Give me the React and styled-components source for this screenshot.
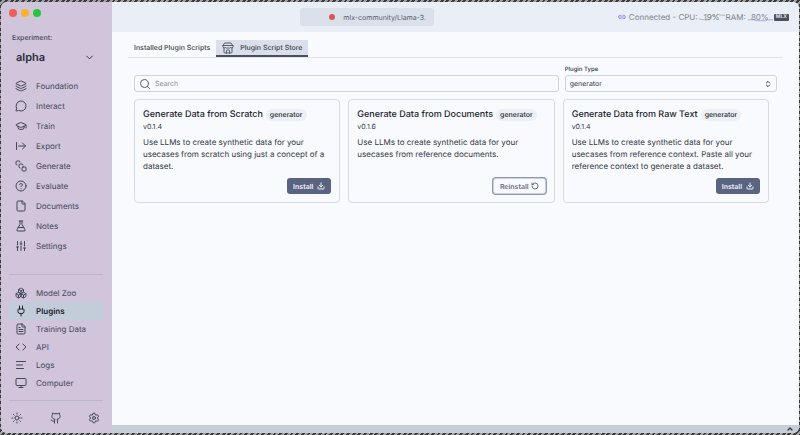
import React from 'react';
import styled, { createGlobalStyle } from 'styled-components';
import {
  Layers, MessageCircle, GraduationCap, ArrowRightFromLine, SquareStack, CircleHelp, File, FlaskConical,
  SlidersVertical, Boxes, Plug, FileText, Code, AlignLeft, Monitor, Sun, Github, Settings, Search,
  ChevronsUpDown, ChevronDown, ChevronUp, Download, RotateCcw, Link2,
} from 'lucide-react';

const GlobalStyle = createGlobalStyle`
  * { box-sizing: border-box; }
  body {
    margin: 0;
    font-family: Inter, "Liberation Sans", sans-serif;
    font-size: 8px;
    color: #32383e;
    text-rendering: geometricPrecision;
  }
  button, input, select { font: inherit; color: inherit; text-rendering: inherit; }
  a { color: inherit; text-decoration: none; }
  svg { flex: none; }
`;

const Desktop = styled.div`
  min-height: 100vh;
  padding: 2px 1px;
  display: flex;
  background: repeating-linear-gradient(135deg, #3a3a3c 0 2px, #a2a2a0 2px 4px);
`;

const Window = styled.div`
  flex: 1;
  min-width: 0;
  display: grid;
  grid-template-columns: 111px minmax(0, 1fr);
  border-radius: 6px;
  overflow: hidden;
  background: #f9fafe;
`;

const Sidebar = styled.aside`
  display: flex;
  flex-direction: column;
  padding: 7px 9px 0 8px;
  background: #d0c5da;
  color: #45455a;
`;

const Lights = styled.div`
  display: flex;
  gap: 4px;
`;

const Light = styled.span`
  width: 8px;
  height: 8px;
  border-radius: 50%;
  background: ${(p) => p.$color};
`;

const ExperimentLabel = styled.div`
  margin-top: 15px;
  padding-left: 3px;
  font-size: 7px;
  line-height: 12px;
  font-weight: 500;
`;

const ExperimentButton = styled.button`
  display: flex;
  align-items: center;
  justify-content: space-between;
  margin-top: 3px;
  padding: 0 8px 0 7px;
  border: 0;
  background: none;
  font-size: 11px;
  line-height: 20px;
  font-weight: 600;
  color: #2c2c3c;
`;

const Nav = styled.nav`
  display: flex;
  flex-direction: column;
  margin-top: ${(p) => p.$top}px;
`;

const NavItem = styled.a`
  display: flex;
  align-items: center;
  gap: 9px;
  height: ${(p) => (p.$dense ? 18 : 20)}px;
  padding-left: 6px;
  font-size: 8px;
  font-weight: ${(p) => (p.$active ? 600 : 400)};
  background: ${(p) => (p.$active ? '#c3cdd9' : 'transparent')};
  color: ${(p) => (p.$active ? '#20202e' : '#45455a')};
`;

const Divider = styled.hr`
  width: 100%;
  margin: ${(p) => p.$top}px 0 0;
  border: 0;
  border-top: 1px solid #bbb7cb;
`;

const SidebarFooter = styled.div`
  display: flex;
  justify-content: space-between;
  padding: 11px 3px 0 2px;
`;

const IconButton = styled.button`
  display: flex;
  padding: 0;
  border: 0;
  background: none;
`;

const Main = styled.main`
  display: flex;
  flex-direction: column;
  min-width: 0;
`;

const Header = styled.header`
  display: grid;
  grid-template-columns: 1fr 134px 2fr;
  align-items: center;
  height: 30px;
  padding: 0 10px;
  background: #eaeef6;
`;

const ModelPill = styled.div`
  grid-column: 2;
  display: flex;
  align-items: center;
  justify-content: center;
  gap: 8px;
  height: 18px;
  padding-left: 22px;
  border-radius: 3px;
  background: #dae1eb;
  color: #555e68;
  font-size: 7px;
  white-space: nowrap;
`;

const Dot = styled.span`
  width: 6px;
  height: 6px;
  border-radius: 50%;
  background: #dc5454;
`;

const Status = styled.div`
  display: flex;
  align-items: center;
  justify-content: flex-end;
  white-space: nowrap;
  color: #7d838c;
`;

const StatusText = styled.span`
  margin-left: 3px;
`;

const Meter = styled.span`
  display: grid;
  place-items: center;
  width: 28px;
  > * { grid-area: 1 / 1; }
`;

const Chip = styled.span`
  padding: 0 2px;
  border-radius: 1px;
  background: #4c5058;
  color: #dfe3ea;
  font-size: 5px;
  line-height: 7px;
  font-weight: 700;
`;

const Content = styled.div`
  flex: 1;
  padding: 8px 16px 0;
`;

const Tabs = styled.div`
  display: flex;
  border-bottom: 1px solid #dfe3ea;
`;

const Tab = styled.button`
  display: flex;
  align-items: center;
  gap: 6px;
  height: 17px;
  padding: 0 6px;
  border: 0;
  border-bottom: 2px solid ${(p) => (p.$active ? '#4a5060' : 'transparent')};
  background: ${(p) => (p.$active ? '#d9e0eb' : 'transparent')};
  font-size: 7px;
  font-weight: 500;
  color: #3a4048;
  white-space: nowrap;
`;

const Panel = styled.div`
  padding: 7px 6px 0;
`;

const Filters = styled.form`
  display: grid;
  grid-template-columns: 2fr 1fr;
  gap: 6px;
  align-items: end;
`;

const Field = styled.label`
  display: flex;
  flex-direction: column;
  min-width: 0;
  font-size: 6px;
  line-height: 10px;
  font-weight: 500;
`;

const Control = styled.span`
  display: flex;
  align-items: center;
  gap: 4px;
  height: 17px;
  padding: 0 4px;
  border: 1px solid #cdd4de;
  border-radius: 3px;
  font-size: 7px;
  font-weight: 400;
`;

const SearchInput = styled.input`
  flex: 1;
  min-width: 0;
  padding: 0;
  border: 0;
  outline: 0;
  background: none;
  &::placeholder { color: #878c94; opacity: 1; }
`;

const Select = styled.select`
  flex: 1;
  min-width: 0;
  padding: 0;
  border: 0;
  background: none;
  appearance: none;
`;

const Cards = styled.div`
  display: grid;
  grid-template-columns: repeat(3, minmax(0, 1fr));
  gap: 8px;
  margin-top: 7px;
  padding-right: 8px;
`;

const Card = styled.article`
  display: flex;
  flex-direction: column;
  min-height: 104px;
  padding: 8px;
  border: 1px solid #d5dae3;
  border-radius: 4px;
`;

const CardTitle = styled.h2`
  display: flex;
  align-items: center;
  gap: 3px;
  margin: 0;
  font-size: 9px;
  line-height: 14px;
  font-weight: 500;
  color: #22262c;
  white-space: nowrap;
`;

const Tag = styled.span`
  padding: 0 4px;
  border-radius: 6px;
  background: #eceff6;
  font-size: 7px;
  line-height: 12px;
  font-weight: 500;
`;

const Version = styled.div`
  font-size: 7px;
  line-height: 10px;
`;

const Description = styled.p`
  margin: 4px 0 0;
  font-size: 8px;
  line-height: 12px;
`;

const Action = styled.button`
  display: flex;
  align-items: center;
  gap: ${(p) => (p.$outlined ? 2 : 4)}px;
  align-self: flex-end;
  height: 16px;
  margin-top: auto;
  padding: 0 6px;
  border: ${(p) => (p.$outlined ? '1px solid #c9cfe0' : '0')};
  border-radius: 3px;
  background: ${(p) => (p.$outlined ? '#f9fafe' : '#5a6480')};
  box-shadow: ${(p) => (p.$outlined ? '0 0 0 1px #8f98b3' : 'none')};
  color: ${(p) => (p.$outlined ? '#686f88' : '#f1f3fa')};
  font-size: 7px;
  font-weight: 600;
`;

const StatusBar = styled.footer`
  display: flex;
  justify-content: flex-end;
  align-items: center;
  height: 8px;
  padding-right: 5px;
  background: #c5ced9;
`;

const experimentLinks = [
  ['Foundation', Layers], ['Interact', MessageCircle], ['Train', GraduationCap], ['Export', ArrowRightFromLine],
  ['Generate', SquareStack], ['Evaluate', CircleHelp], ['Documents', File], ['Notes', FlaskConical],
  ['Settings', SlidersVertical],
];

const appLinks = [
  ['Model Zoo', Boxes], ['Plugins', Plug], ['Training Data', FileText], ['API', Code], ['Logs', AlignLeft],
  ['Computer', Monitor],
];

const plugins = [
  { name: 'Generate Data from Scratch', version: 'v0.1.4', text: 'Use LLMs to create synthetic data for your usecases from scratch using just a concept of a dataset.' },
  { name: 'Generate Data from Documents', version: 'v0.1.6', text: 'Use LLMs to create synthetic data for your usecases from reference documents.', installed: true },
  { name: 'Generate Data from Raw Text', version: 'v0.1.4', text: 'Use LLMs to create synthetic data for your usecases from reference context. Paste all your reference context to generate a dataset.' },
];

function Links({ items, top, dense, active }) {
  return (
    <Nav $top={top}>
      {items.map(([label, Icon]) => (
        <NavItem key={label} href="#" $dense={dense} $active={label === active}>
          <Icon size={12} strokeWidth={2} />
          {label}
        </NavItem>
      ))}
    </Nav>
  );
}

function StoreIcon() {
  return (
    <svg width="12" height="12" viewBox="0 0 24 24" fill="none" stroke="currentColor" strokeWidth="1.6" strokeLinecap="round" strokeLinejoin="round" aria-hidden="true">
      <path d="M6 2h12l4 6v2a3 3 0 0 1-5 1 3 3 0 0 1-5 0 3 3 0 0 1-5 0 3 3 0 0 1-5-1V8z" />
      <path d="M2 7h20M4 12v8a2 2 0 0 0 2 2h12a2 2 0 0 0 2-2v-8M9 22v-5a1 1 0 0 1 1-1h4a1 1 0 0 1 1 1v5" />
    </svg>
  );
}

function PluginCard({ plugin }) {
  return (
    <Card>
      <CardTitle>{plugin.name} <Tag>generator</Tag></CardTitle>
      <Version>{plugin.version}</Version>
      <Description>{plugin.text}</Description>
      <Action type="button" $outlined={plugin.installed}>
        {plugin.installed ? 'Reinstall' : 'Install'}
        {plugin.installed ? <RotateCcw size={8} strokeWidth={3} /> : <Download size={8} strokeWidth={3} />}
      </Action>
    </Card>
  );
}

export default function App() {
  return (
    <>
      <GlobalStyle />
      <Desktop>
        <Window>
          <Sidebar>
            <Lights>
              <Light $color="#ec5f5d" />
              <Light $color="#f5b32f" />
              <Light $color="#28c440" />
            </Lights>
            <ExperimentLabel>Experiment:</ExperimentLabel>
            <ExperimentButton type="button">alpha <ChevronDown size={11} /></ExperimentButton>
            <Links items={experimentLinks} top={9} />
            <Divider $top={18} />
            <Links items={appLinks} top={9} dense active="Plugins" />
            <Divider $top={8} />
            <SidebarFooter>
              <IconButton type="button" aria-label="Theme"><Sun size={12} /></IconButton>
              <IconButton type="button" aria-label="GitHub"><Github size={12} /></IconButton>
              <IconButton type="button" aria-label="Preferences"><Settings size={12} /></IconButton>
            </SidebarFooter>
          </Sidebar>
          <Main>
            <Header>
              <ModelPill><Dot />mlx-community/Llama-3.</ModelPill>
              <Status>
                <Link2 size={8} strokeWidth={3} color="#8f86e0" />
                <StatusText>Connected - CPU:</StatusText>
                <Meter>
                  <svg width="28" height="10" viewBox="0 0 30 10" fill="none" stroke="#a9b8ac" strokeWidth="1"><path d="M1 7l5 1h6l3-5 3 2 3-3 3 1 5 0" /></svg>
                  <span>19%</span>
                </Meter>
                <span>RAM:</span>
                <Meter>
                  <svg width="28" height="10" viewBox="0 0 30 10" fill="none" stroke="#a3a8de" strokeWidth="1"><path d="M2 8h6l3 1h10l2-1h6" /></svg>
                  <span>80%</span>
                </Meter>
                <Chip>MLX</Chip>
              </Status>
            </Header>
            <Content>
              <Tabs role="tablist">
                <Tab type="button" role="tab" aria-selected="false">Installed Plugin Scripts</Tab>
                <Tab type="button" role="tab" aria-selected="true" $active><StoreIcon />Plugin Script Store</Tab>
              </Tabs>
              <Panel>
                <Filters>
                  <Control>
                    <Search size={12} color="#555e68" />
                    <SearchInput type="search" placeholder="Search" aria-label="Search" />
                  </Control>
                  <Field>
                    Plugin Type
                    <Control>
                      <Select defaultValue="generator"><option>generator</option></Select>
                      <ChevronsUpDown size={8} strokeWidth={3} />
                    </Control>
                  </Field>
                </Filters>
                <Cards>
                  {plugins.map((plugin) => <PluginCard key={plugin.name} plugin={plugin} />)}
                </Cards>
              </Panel>
            </Content>
            <StatusBar><ChevronUp size={8} strokeWidth={4} /></StatusBar>
          </Main>
        </Window>
      </Desktop>
    </>
  );
}
